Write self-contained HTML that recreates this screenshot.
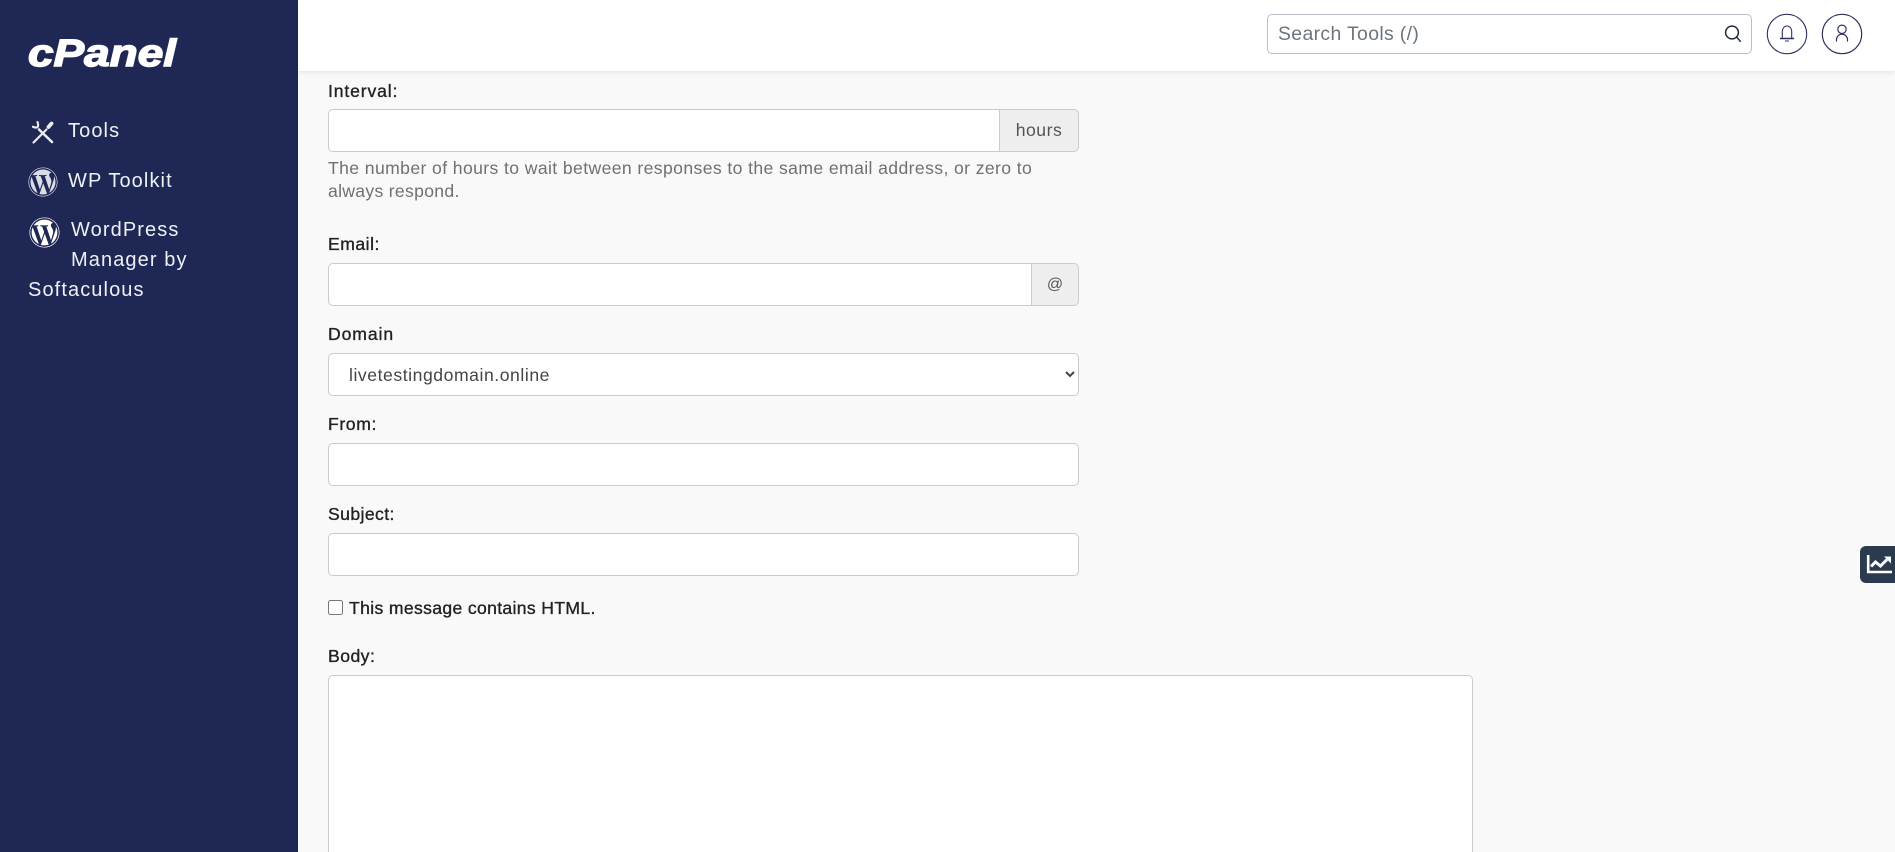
<!DOCTYPE html>
<html lang="en">
<head>
<meta charset="utf-8">
<title>cPanel</title>
<style>
html,body{margin:0;padding:0;width:1895px;height:852px;overflow:hidden;background:#f9f9f9;font-family:"Liberation Sans",sans-serif;}
*{box-sizing:border-box;}
#root{position:relative;width:1895px;height:852px;overflow:hidden;background:#f9f9f9;}
.t{position:absolute;white-space:nowrap;line-height:24px;height:24px;}
.side{position:absolute;left:0;top:0;width:298px;height:852px;background:#1f2754;}
.head{position:absolute;left:298px;top:0;width:1597px;height:71px;background:#fff;box-shadow:0 1px 5px rgba(0,0,0,.1);z-index:2;}
.nav{color:#eef0f6;font-size:20px;letter-spacing:1.1px;}
.lbl{color:#222;font-size:17.6px;-webkit-text-stroke:.35px #222;}
.box{position:absolute;left:328px;width:751px;height:43px;background:#fff;border:1px solid #cbcbcb;border-radius:5px;margin:0;padding:0;outline:none;}
.add{position:absolute;height:43px;background:#eee;border:1px solid #cbcbcb;border-radius:0 5px 5px 0;color:#555;font-size:17.6px;text-align:center;line-height:40px;}
.hint{color:#707070;font-size:17.6px;}
select.box{font-family:"Liberation Sans",sans-serif;font-size:17.6px;color:#444;padding-left:16px;letter-spacing:.55px;line-height:20px;}
</style>
</head>
<body>
<div id="root">
<div class="side"></div>
<svg style="position:absolute;left:20px;top:24px" width="170" height="50" viewBox="0 0 170 50">
  <text x="8" y="42" font-family="Liberation Sans" font-weight="700" font-style="italic" font-size="38" fill="#fff" stroke="#fff" stroke-width="1.4" textLength="148" lengthAdjust="spacingAndGlyphs">cPanel</text>
</svg>

<svg style="position:absolute;left:30px;top:119px" width="26" height="26" viewBox="0 0 26 26" fill="none" stroke="#e9ebf2" stroke-linecap="round">
  <path d="M9 10.5L22 23" stroke-width="2.6"/>
  <path d="M7.5 3Q10 10.5 3 7.8" stroke-width="2.2"/>
  <path d="M3.5 23.5L16.5 10.5" stroke-width="2.2"/>
  <path d="M18.5 8L21.5 4.5" stroke-width="3.8"/>
</svg>
<div class="t nav" style="left:68px;top:119px">Tools</div>

<svg style="position:absolute;left:28px;top:167px" width="30" height="30" viewBox="0 0 512 512"><path fill="#d9dce8" d="M61.7 169.4l101.5 278C92.2 413 43.3 340.2 43.3 256c0-30.9 6.6-60.1 18.4-86.6zm337.9 75.9c0-26.3-9.4-44.5-17.5-58.7-10.8-17.5-20.9-32.4-20.9-49.9 0-19.6 14.8-37.8 35.7-37.8.9 0 1.8.1 2.8.2-37.9-34.7-88.3-55.9-143.7-55.9-74.3 0-139.7 38.1-177.8 95.9 5 .2 9.7.3 13.7.3 22.2 0 56.7-2.7 56.7-2.7 11.5-.7 12.8 16.2 1.4 17.5 0 0-11.5 1.3-24.3 2l77.5 230.4L249.8 247l-33.1-90.8c-11.5-.7-22.3-2-22.3-2-11.5-.7-10.1-18.2 1.3-17.5 0 0 35.1 2.7 56 2.7 22.2 0 56.7-2.7 56.7-2.7 11.5-.7 12.8 16.2 1.4 17.5 0 0-11.5 1.3-24.3 2l76.9 228.7 21.2-70.9c9-29.4 16-50.5 16-68.7zm-139.9 29.4l-63.8 185.5c19.1 5.6 39.2 8.7 60.1 8.7 24.8 0 48.5-4.3 70.6-12.1-.6-.9-1.1-1.9-1.5-2.9l-65.4-179.2zm183-120.7c.9 6.8 1.4 14 1.4 21.9 0 21.6-4 45.8-16.2 76.2l-65 187.9C427.1 403 468.7 334.4 468.7 256c0-36.9-9.4-71.7-26-102zM504 256c0 136.8-111.3 248-248 248C119.2 504 8 392.7 8 256 8 119.2 119.2 8 256 8c136.7 0 248 111.2 248 248zm-11.4 0c0-130.5-106.2-236.6-236.6-236.6C125.5 19.4 19.4 125.5 19.4 256S125.6 492.6 256 492.6c130.5 0 236.6-106.1 236.6-236.6z"/></svg>
<div class="t nav" style="left:68px;top:169px">WP Toolkit</div>

<svg style="position:absolute;left:29px;top:217px" width="31" height="31" viewBox="0 0 512 512"><path fill="#ffffff" d="M61.7 169.4l101.5 278C92.2 413 43.3 340.2 43.3 256c0-30.9 6.6-60.1 18.4-86.6zm337.9 75.9c0-26.3-9.4-44.5-17.5-58.7-10.8-17.5-20.9-32.4-20.9-49.9 0-19.6 14.8-37.8 35.7-37.8.9 0 1.8.1 2.8.2-37.9-34.7-88.3-55.9-143.7-55.9-74.3 0-139.7 38.1-177.8 95.9 5 .2 9.7.3 13.7.3 22.2 0 56.7-2.7 56.7-2.7 11.5-.7 12.8 16.2 1.4 17.5 0 0-11.5 1.3-24.3 2l77.5 230.4L249.8 247l-33.1-90.8c-11.5-.7-22.3-2-22.3-2-11.5-.7-10.1-18.2 1.3-17.5 0 0 35.1 2.7 56 2.7 22.2 0 56.7-2.7 56.7-2.7 11.5-.7 12.8 16.2 1.4 17.5 0 0-11.5 1.3-24.3 2l76.9 228.7 21.2-70.9c9-29.4 16-50.5 16-68.7zm-139.9 29.4l-63.8 185.5c19.1 5.6 39.2 8.7 60.1 8.7 24.8 0 48.5-4.3 70.6-12.1-.6-.9-1.1-1.9-1.5-2.9l-65.4-179.2zm183-120.7c.9 6.8 1.4 14 1.4 21.9 0 21.6-4 45.8-16.2 76.2l-65 187.9C427.1 403 468.7 334.4 468.7 256c0-36.9-9.4-71.7-26-102zM504 256c0 136.8-111.3 248-248 248C119.2 504 8 392.7 8 256 8 119.2 119.2 8 256 8c136.7 0 248 111.2 248 248zm-11.4 0c0-130.5-106.2-236.6-236.6-236.6C125.5 19.4 19.4 125.5 19.4 256S125.6 492.6 256 492.6c130.5 0 236.6-106.1 236.6-236.6z"/></svg>
<div class="t nav" style="left:71px;top:218px">WordPress</div>
<div class="t nav" style="left:71px;top:248px">Manager by</div>
<div class="t nav" style="left:28px;top:278px">Softaculous</div>

<div class="head"></div>
<div style="position:absolute;z-index:3;left:1267px;top:14px;width:485px;height:40px;background:#fff;border:1px solid #bdbdd0;border-radius:5px"></div>
<div class="t" style="z-index:3;left:1278px;top:22px;font-size:19.4px;color:#6c757d;letter-spacing:.36px">Search Tools (/)</div>
<svg style="position:absolute;z-index:3;left:1720px;top:20px" width="26" height="26" viewBox="0 0 26 26" fill="none" stroke="#1f2a3a" stroke-width="1.5" stroke-linecap="round">
  <circle cx="12" cy="12.5" r="6.4"/><path d="M16.8 17.2L20.3 21.3"/>
</svg>
<svg style="position:absolute;z-index:3;left:1766px;top:13px" width="42" height="42" viewBox="0 0 42 42" fill="none" stroke="#2b3260" stroke-width="1.1" stroke-linecap="round">
  <circle cx="21" cy="21" r="19.7"/>
  <path d="M16.3 25V18.3a4.7 5.3 0 0 1 9.4 0V25"/><path d="M14.5 25.5H27.5" stroke-width="1.4"/><path d="M19.5 28H22.5"/>
</svg>
<svg style="position:absolute;z-index:3;left:1821px;top:13px" width="42" height="42" viewBox="0 0 42 42" fill="none" stroke="#2b3260" stroke-width="1.2" stroke-linecap="round">
  <circle cx="21" cy="21" r="19.7"/>
  <circle cx="21" cy="16.3" r="4.2"/><path d="M15.5 28V26.5a5.5 5.3 0 0 1 11 0V28"/>
</svg>

<div class="t lbl" style="left:328px;top:79px;letter-spacing:.85px">Interval:</div>
<div class="box" style="top:109px;width:672px;border-radius:5px 0 0 5px"></div>
<div class="add" style="left:999px;top:109px;width:80px;letter-spacing:.5px">hours</div>
<div class="t hint" style="left:328px;top:156px;letter-spacing:.39px">The number of hours to wait between responses to the same email address, or zero to</div>
<div class="t hint" style="left:328px;top:179px;letter-spacing:.3px">always respond.</div>

<div class="t lbl" style="left:328px;top:232px;letter-spacing:.5px">Email:</div>
<div class="box" style="top:263px;width:704px;border-radius:5px 0 0 5px"></div>
<div class="add" style="left:1031px;top:263px;width:48px;font-size:16px;line-height:42px">@</div>

<div class="t lbl" style="left:328px;top:322px;letter-spacing:.9px">Domain</div>
<select class="box" style="top:353px"><option>livetestingdomain.online</option></select>

<div class="t lbl" style="left:328px;top:412px;letter-spacing:.6px">From:</div>
<input class="box" style="top:443px" type="text">

<div class="t lbl" style="left:328px;top:502px;letter-spacing:.4px">Subject:</div>
<input class="box" style="top:533px" type="text">

<input type="checkbox" style="position:absolute;left:328px;top:600px;width:15px;height:15px;margin:0">
<div class="t lbl" style="left:349px;top:596px;letter-spacing:.34px">This message contains HTML.</div>

<div class="t lbl" style="left:328px;top:644px;letter-spacing:.46px">Body:</div>
<div class="box" style="top:675px;width:1145px;height:177px;border-bottom:none;border-radius:5px 5px 0 0"></div>

<div style="position:absolute;left:1860px;top:546px;width:35px;height:37px;background:#2a3a4f;border-radius:6px 0 0 6px"></div>
<svg style="position:absolute;left:1860px;top:546px" width="35" height="37" viewBox="0 0 35 37" fill="none" stroke="#fff">
  <path d="M8.2 9V26H32" stroke-width="2.6"/>
  <path d="M11 20.5L15.5 16L20.5 20L27 13.5" stroke-width="3"/>
  <path d="M24 10.5H31V17.5Z" fill="#fff" stroke="none"/>
</svg>
</div>
</body>
</html>
